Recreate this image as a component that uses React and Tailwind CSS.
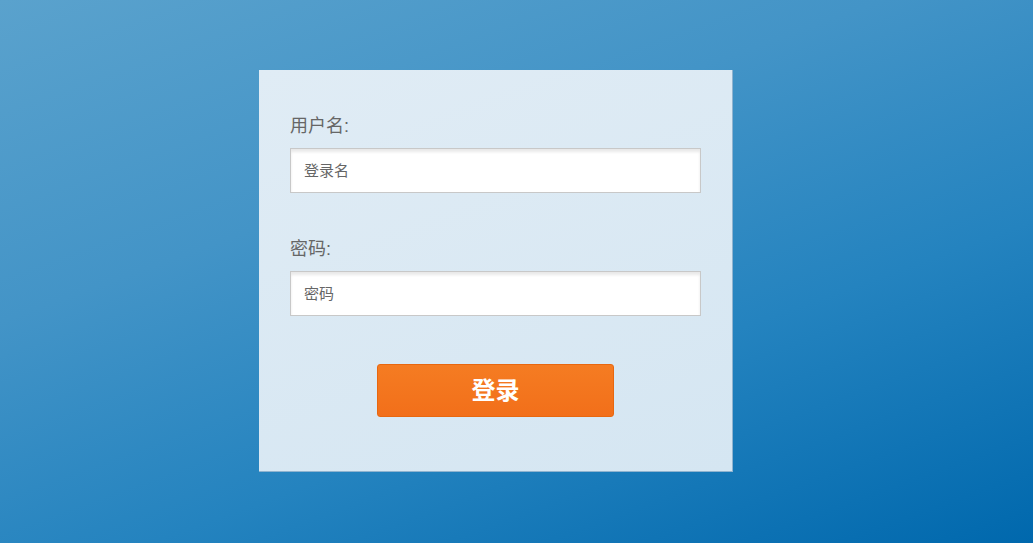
export default function App() {
  return (
    <div
      className="w-full h-[543px] flex items-start justify-center pt-[70px] pr-[41px] bg-[linear-gradient(160deg,#5aa2cd_0%,#4394c7_35%,#2483bf_65%,#0068ad_100%)]"
      style={{ fontFamily: '"Liberation Sans", "Noto Sans CJK SC", sans-serif' }}
    >
      <div className="w-[474px] h-[402px] px-[31px] pt-[43px] bg-[linear-gradient(160deg,#e0ecf5_0%,#d5e6f2_100%)] border-r border-b border-[#8fb3cf]">
        <form className="flex flex-col" onSubmit={(e) => e.preventDefault()}>
          {/* username */}
          <label className="text-[18px] leading-[26px] text-[#666666]">用户名:</label>
          <input
            type="text"
            placeholder="登录名"
            className="mt-[9px] w-[411px] h-[45px] px-[13px] bg-white border border-[#c8c8c8] shadow-[inset_0_3px_3px_rgba(0,0,0,0.09)] text-[15px] text-[#555] placeholder:text-[#666666] outline-none"
          />

          {/* password */}
          <label className="mt-[43px] text-[18px] leading-[26px] text-[#666666]">密码:</label>
          <input
            type="password"
            placeholder="密码"
            className="mt-[9px] w-[411px] h-[45px] px-[13px] bg-white border border-[#c8c8c8] shadow-[inset_0_3px_3px_rgba(0,0,0,0.09)] text-[15px] text-[#555] placeholder:text-[#666666] outline-none"
          />

          <div className="mt-[48px] flex justify-center w-[411px]">
            <button
              type="submit"
              className="w-[237px] h-[53px] rounded-[3px] bg-[linear-gradient(180deg,#f57c22_0%,#f26f1a_100%)] border border-[#e8670f] text-white text-[24px] font-bold"
            >
              登录
            </button>
          </div>
        </form>
      </div>
    </div>
  );
}
